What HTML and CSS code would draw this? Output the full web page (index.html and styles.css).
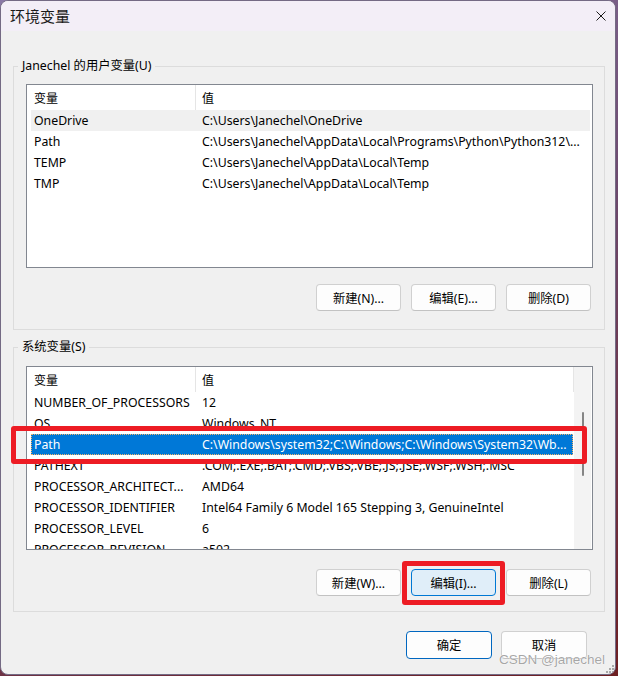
FILE: index.html
```html
<!DOCTYPE html>
<html lang="zh-CN">
<head>
<meta charset="utf-8">
<title>环境变量</title>
<link rel="stylesheet" href="styles.css">
</head>
<body>
<div class="window">
  <div class="titlebar">
    <span class="title">环境变量</span>
    <svg class="close" width="10" height="10" viewBox="0 0 10 10"><path d="M0.5 0.5 L9.5 9.5 M9.5 0.5 L0.5 9.5" stroke="#1a1a1a" stroke-width="1" fill="none"/></svg>
  </div>
  <div class="content">
    <fieldset class="group g-user">
      <legend>Janechel 的用户变量(U)</legend>
      <div class="group-body">
        <div class="list">
          <div class="list-main">
            <div class="list-header"><div class="c1">变量</div><div class="c2">值</div></div>
            <div class="row hover"><div class="c1">OneDrive</div><div class="c2">C:\Users\Janechel\OneDrive</div></div>
            <div class="row"><div class="c1">Path</div><div class="c2">C:\Users\Janechel\AppData\Local\Programs\Python\Python312\...</div></div>
            <div class="row"><div class="c1">TEMP</div><div class="c2">C:\Users\Janechel\AppData\Local\Temp</div></div>
            <div class="row"><div class="c1">TMP</div><div class="c2">C:\Users\Janechel\AppData\Local\Temp</div></div>
          </div>
        </div>
        <div class="btns">
          <button class="btn">新建(N)...</button>
          <button class="btn">编辑(E)...</button>
          <button class="btn">删除(D)</button>
        </div>
      </div>
    </fieldset>
    <fieldset class="group g-sys">
      <legend>系统变量(S)</legend>
      <div class="group-body">
        <div class="list">
          <div class="list-main">
            <div class="list-header"><div class="c1">变量</div><div class="c2">值</div></div>
            <div class="row"><div class="c1">NUMBER_OF_PROCESSORS</div><div class="c2">12</div></div>
            <div class="row"><div class="c1">OS</div><div class="c2">Windows_NT</div></div>
            <div class="row selected"><div class="c1">Path</div><div class="c2">C:\Windows\system32;C:\Windows;C:\Windows\System32\Wb...</div></div>
            <div class="row"><div class="c1">PATHEXT</div><div class="c2">.COM;.EXE;.BAT;.CMD;.VBS;.VBE;.JS;.JSE;.WSF;.WSH;.MSC</div></div>
            <div class="row"><div class="c1">PROCESSOR_ARCHITECT...</div><div class="c2">AMD64</div></div>
            <div class="row"><div class="c1">PROCESSOR_IDENTIFIER</div><div class="c2">Intel64 Family 6 Model 165 Stepping 3, GenuineIntel</div></div>
            <div class="row"><div class="c1">PROCESSOR_LEVEL</div><div class="c2">6</div></div>
            <div class="row"><div class="c1">PROCESSOR_REVISION</div><div class="c2">a502</div></div>
          </div>
          <div class="scrollbar"><div class="thumb"></div></div>
        </div>
        <div class="btns">
          <button class="btn">新建(W)...</button>
          <button class="btn btn-hot marked">编辑(I)...</button>
          <button class="btn">删除(L)</button>
        </div>
      </div>
    </fieldset>
    <div class="dialog-btns">
      <button class="btn btn-default">确定</button>
      <button class="btn">取消</button>
    </div>
  </div>
  <div class="mark-row"></div>
  <div class="watermark">CSDN @janechel</div>
  <svg class="grip" width="9" height="9" viewBox="0 0 9 9">
    <rect x="7" y="1" width="2" height="2" fill="#a8a8a8"/>
    <rect x="4" y="4" width="2" height="2" fill="#a8a8a8"/>
    <rect x="7" y="4" width="2" height="2" fill="#a8a8a8"/>
    <rect x="1" y="7" width="2" height="2" fill="#a8a8a8"/>
    <rect x="4" y="7" width="2" height="2" fill="#a8a8a8"/>
    <rect x="7" y="7" width="2" height="2" fill="#a8a8a8"/>
  </svg>
</div>
</body>
</html>
```
FILE: styles.css
```css
html, body {
  margin: 0;
  padding: 0;
  height: 676px;
  overflow: hidden;
  background: linear-gradient(160deg, #8a78a6 0%, #6d4a6e 45%, #6e1f22 100%);
}
body {
  font-family: "Noto Sans", "Noto Sans CJK SC", sans-serif;
  font-size: 12.3px;
  color: #000;
}
.window {
  position: relative;
  width: 616px;
  height: 675px;
  box-sizing: border-box;
  border: 1px solid #746a84;
  border-radius: 8px;
  background: #f0f0f0;
  overflow: hidden;
  display: flex;
  flex-direction: column;
}
.titlebar {
  height: 30px;
  flex: none;
  background: #f3eef7;
  display: flex;
  align-items: center;
  padding-left: 9px;
}
.title {
  font-family: "Noto Sans CJK SC", sans-serif;
  font-size: 15px;
  line-height: 18px;
  color: #1a1a1a;
}
.close {
  margin-left: auto;
  margin-right: 9px;
}
.content {
  padding: 27px 10px 0 12px;
  display: flex;
  flex-direction: column;
}
.group {
  margin: 0;
  padding: 0;
  border: 1px solid #dcdcdc;
  min-width: 0;
}
.group legend {
  margin-left: 4px;
  padding: 0 4px;
  line-height: 16px;
  font-family: "Noto Sans", "Noto Sans CJK SC", sans-serif;
  font-size: 12.3px;
}
.g-sys {
  margin-top: 9px;
}
.g-user .group-body {
  padding: 10px 11px 18px 12px;
}
.g-sys .group-body {
  padding: 11px 11px 15px 12px;
}
.list {
  height: 184px;
  box-sizing: border-box;
  border: 1px solid #828790;
  background: #fff;
  display: flex;
  overflow: hidden;
}
.list-main {
  flex: 1;
  min-width: 0;
  display: flex;
  flex-direction: column;
}
.list-header, .row {
  display: grid;
  grid-template-columns: 165px 1fr;
  margin-left: 4px;
  margin-right: 2px;
  white-space: nowrap;
}
.g-sys .list-header, .g-sys .row {
  margin-right: 1px;
}
.list-header {
  height: 25px;
  line-height: 25px;
  flex: none;
  font-family: "Noto Sans CJK SC", sans-serif;
  font-size: 12px;
}
.list-header .c1 {
  border-right: 1px solid #e5e5e5;
}
.g-sys .list-header {
  margin-right: 0;
  border-right: 1px solid #e5e5e5;
}
.row {
  height: 21px;
  line-height: 21px;
  flex: none;
}
.c1, .c2 {
  overflow: hidden;
  text-overflow: ellipsis;
}
.c1 { padding-left: 3px; }
.c2 { padding-left: 6px; }
.row.hover {
  background: #f0f0f0;
}
.row.selected {
  background: #0078d7;
  color: #fff;
  outline: 1px dotted #f4b36a;
  outline-offset: -1px;
}
.scrollbar {
  width: 17px;
  margin-right: 1px;
  flex: none;
  background: #f3f3f3;
  display: flex;
  flex-direction: column;
  align-items: center;
}
.thumb {
  margin-top: 45px;
  width: 2px;
  height: 64px;
  border-radius: 1px;
  background: #858585;
}
.btns {
  display: flex;
  justify-content: flex-end;
  gap: 10px;
  padding-right: 2px;
}
.g-user .btns { margin-top: 16px; }
.g-sys .btns { margin-top: 19px; }
.btn {
  position: relative;
  width: 85px;
  height: 27px;
  box-sizing: border-box;
  border: 1px solid #d0d0d0;
  border-bottom-color: #c2c2c2;
  border-radius: 4px;
  background: #fdfdfd;
  font-family: "Noto Sans", "Noto Sans CJK SC", sans-serif;
  font-size: 12.3px;
  color: #000;
  padding: 0;
}
.btn-hot {
  background: #e0eef9;
  border-color: #0078d4;
}
.btn-default {
  border-color: #0067c0;
  height: 28px;
}
.marked::after {
  content: "";
  position: absolute;
  top: -9px;
  right: -10px;
  bottom: -10px;
  left: -10px;
  border: 5px solid #ed1c24;
  border-radius: 3px;
}
.dialog-btns {
  display: flex;
  justify-content: flex-end;
  gap: 9px;
  margin-top: 19px;
  padding-right: 18px;
}
.dialog-btns .btn {
  width: 86px;
  height: 28px;
}
.mark-row {
  position: absolute;
  left: 10px;
  top: 425px;
  width: 576px;
  height: 38px;
  box-sizing: border-box;
  border: 5px solid #ed1c24;
  border-radius: 3px;
}
.watermark {
  position: absolute;
  left: 498px;
  top: 650px;
  font-family: "Liberation Sans", Arial, sans-serif;
  font-size: 13.5px;
  line-height: 18px;
  color: rgba(150, 150, 150, 0.85);
  text-shadow: 0 0 1px #fff, 0 0 1px #fff;
}
.grip {
  position: absolute;
  right: 1px;
  bottom: 1px;
}
```
